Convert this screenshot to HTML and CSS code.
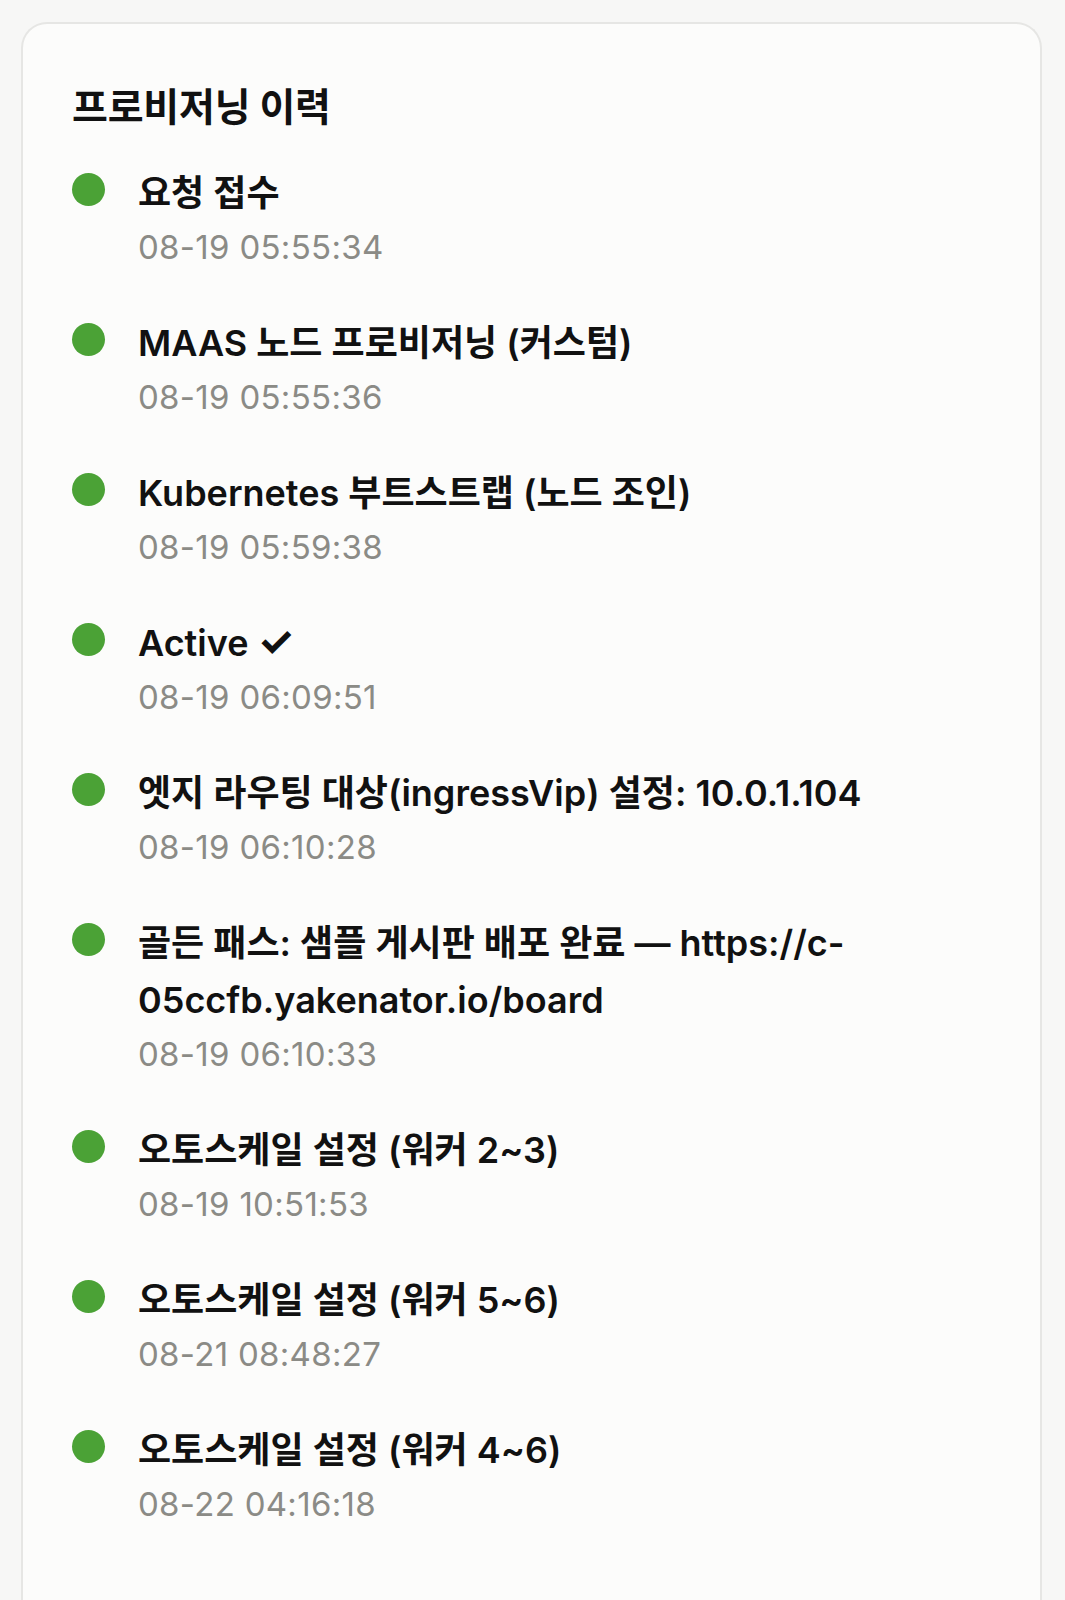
FILE: index.html
```html
<!DOCTYPE html>
<html lang="ko">
<head>
<meta charset="utf-8">
<title>프로비저닝 이력</title>
<link rel="stylesheet" href="styles.css">
</head>
<body>
<section class="card">
  <h2 class="card-title">프로비저닝 이력</h2>
  <ul class="timeline">
    <li class="event"><span class="dot"></span><div class="event-body"><div class="event-title">요청 접수</div><div class="event-time">08-19 05:55:34</div></div></li>
    <li class="event"><span class="dot"></span><div class="event-body"><div class="event-title">MAAS 노드 프로비저닝 (커스텀)</div><div class="event-time">08-19 05:55:36</div></div></li>
    <li class="event"><span class="dot"></span><div class="event-body"><div class="event-title">Kubernetes 부트스트랩 (노드 조인)</div><div class="event-time">08-19 05:59:38</div></div></li>
    <li class="event"><span class="dot"></span><div class="event-body"><div class="event-title">Active <span class="check">✓</span></div><div class="event-time">08-19 06:09:51</div></div></li>
    <li class="event"><span class="dot"></span><div class="event-body"><div class="event-title">엣지 라우팅 대상(ingressVip) 설정: 10.0.1.104</div><div class="event-time">08-19 06:10:28</div></div></li>
    <li class="event"><span class="dot"></span><div class="event-body"><div class="event-title">골든 패스: 샘플 게시판 배포 완료 — https://c-05ccfb.yakenator.io/board</div><div class="event-time">08-19 06:10:33</div></div></li>
    <li class="event"><span class="dot"></span><div class="event-body"><div class="event-title">오토스케일 설정 (워커 2~3)</div><div class="event-time">08-19 10:51:53</div></div></li>
    <li class="event"><span class="dot"></span><div class="event-body"><div class="event-title">오토스케일 설정 (워커 5~6)</div><div class="event-time">08-21 08:48:27</div></div></li>
    <li class="event"><span class="dot"></span><div class="event-body"><div class="event-title">오토스케일 설정 (워커 4~6)</div><div class="event-time">08-22 04:16:18</div></div></li>
  </ul>
</section>
</body>
</html>
```
FILE: styles.css
```css
html, body {
  margin: 0;
  padding: 0;
  background: #f7f7f6;
}
body {
  padding: 22px 23px 0 21px;
  font-family: Inter, "Noto Sans CJK KR", sans-serif;
  color: #111111;
}
.card {
  background: #fcfcfb;
  border: 2px solid #e6e6e4;
  border-bottom: none;
  border-radius: 26px 26px 0 0;
  padding: 58px 51px 60px 49px;
  min-height: 1620px;
  box-sizing: border-box;
}
.card-title {
  margin: 0 0 33px 0;
  font-size: 39px;
  line-height: 50px;
  font-weight: 700;
  letter-spacing: -0.2px;
}
.timeline {
  list-style: none;
  margin: 0;
  padding: 0;
  display: flex;
  flex-direction: column;
  gap: 43px;
}
.event {
  display: flex;
  align-items: flex-start;
  gap: 33px;
}
.dot {
  flex: none;
  width: 33px;
  height: 33px;
  border-radius: 50%;
  background: #4ba236;
  margin-top: 8px;
}
.event-body {
  flex: 1;
  min-width: 0;
}
.event-title {
  font-size: 36px;
  line-height: 57px;
  font-weight: 600;
  letter-spacing: 0;
}
.check {
  font-size: 41px;
  line-height: 1;
  font-weight: 700;
}
.event-time {
  font-size: 33px;
  line-height: 50px;
  color: #8b8b86;
  font-weight: 400;
  letter-spacing: 0.3px;
}
```
